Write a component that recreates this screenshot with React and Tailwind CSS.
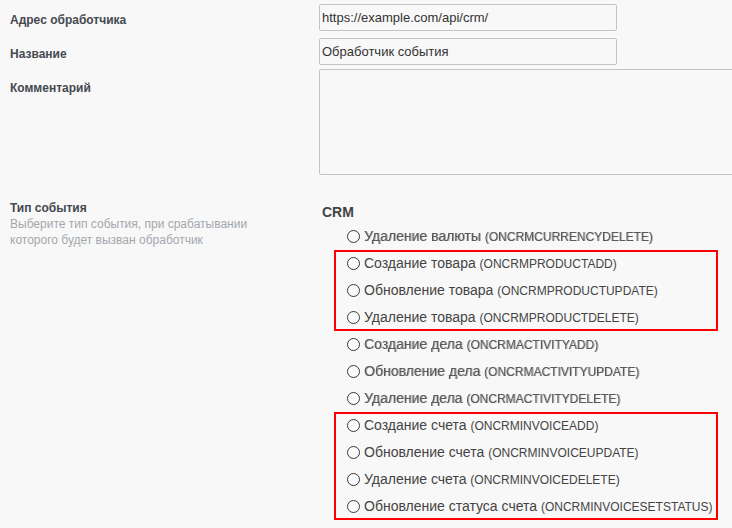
import React from 'react';

const events = [
  { name: 'Удаление валюты', code: 'ONCRMCURRENCYDELETE', group: 0 },
  { name: 'Создание товара', code: 'ONCRMPRODUCTADD', group: 1 },
  { name: 'Обновление товара', code: 'ONCRMPRODUCTUPDATE', group: 1 },
  { name: 'Удаление товара', code: 'ONCRMPRODUCTDELETE', group: 1 },
  { name: 'Создание дела', code: 'ONCRMACTIVITYADD', group: 2 },
  { name: 'Обновление дела', code: 'ONCRMACTIVITYUPDATE', group: 2 },
  { name: 'Удаление дела', code: 'ONCRMACTIVITYDELETE', group: 2 },
  { name: 'Создание счета', code: 'ONCRMINVOICEADD', group: 3 },
  { name: 'Обновление счета', code: 'ONCRMINVOICEUPDATE', group: 3 },
  { name: 'Удаление счета', code: 'ONCRMINVOICEDELETE', group: 3 },
  { name: 'Обновление статуса счета', code: 'ONCRMINVOICESETSTATUS', group: 3 },
];

const groups = [
  { id: 0, marked: false },
  { id: 1, marked: true },
  { id: 2, marked: false },
  { id: 3, marked: true },
];

const EventRow = ({ ev, faded }) => (
  <label className="flex items-center h-[27px] pl-[13px] text-[#444]">
    <span className="w-[13px] h-[13px] rounded-full border border-[#3a3a3a] bg-[#fbfbfb] shrink-0" />
    <span
      className={`ml-[4px] text-[14px] leading-4 whitespace-nowrap ${
        faded ? 'text-[#5a5a5a] blur-[0.3px] [text-shadow:1px_0_0_rgba(0,0,0,0.3)]' : ''
      }`}
    >
      {ev.name} <span className="text-[12px]">({ev.code})</span>
    </span>
  </label>
);

const App = () => {
  return (
    <div className="h-[528px] w-[732px] overflow-hidden bg-[#f8f8f8] font-['Liberation_Sans',Arial,sans-serif]">
      <div className="flex pt-[4px]">
        <div className="w-[319px] shrink-0 pl-[10px] pt-[8px] text-[12px] leading-4 font-bold text-[#454950]">
          Адрес обработчика
        </div>
        <div className="w-[298px] h-[27px] border border-[#c4c4c4] rounded-[2px] bg-[#f8f8f8] px-[2px] flex items-center text-[13px] text-[#333]">
          https://example.com/api/crm/
        </div>
      </div>

      <div className="flex mt-[7px]">
        <div className="w-[319px] shrink-0 pl-[10px] pt-[8px] text-[12px] leading-4 font-bold text-[#454950]">
          Название
        </div>
        <div className="w-[298px] h-[27px] border border-[#c4c4c4] rounded-[2px] bg-[#f8f8f8] px-[2px] flex items-center text-[13px] text-[#333]">
          Обработчик события
        </div>
      </div>

      <div className="flex mt-[4px]">
        <div className="w-[319px] shrink-0 pl-[10px] pt-[11px] text-[12px] leading-4 font-bold text-[#454950]">
          Комментарий
        </div>
        <div className="w-[500px] h-[106px] shrink-0 border border-[#c4c4c4] rounded-[2px] bg-[#f8f8f8]" />
      </div>

      <div className="flex mt-[25px]">
        <div className="w-[319px] shrink-0 pl-[10px] text-[12px] leading-4">
          <div className="font-bold text-[#454950]">Тип события</div>
          <div className="text-[#a3a8ae]">
            Выберите тип события, при срабатывании
            <br />
            которого будет вызван обработчик
          </div>
        </div>
        <div className="pt-[4px]">
          <div className="pl-[3px] text-[14px] leading-4 font-bold text-[#444]">CRM</div>
          <div className="mt-[3px] ml-[15px] w-[384px]">
            {groups.map((g) => (
              <div key={g.id} className="relative">
                {events
                  .filter((ev) => ev.group === g.id)
                  .map((ev) => (
                    <EventRow key={ev.code} ev={ev} faded={!g.marked} />
                  ))}
                {g.marked && (
                  <div className="absolute inset-0 border-2 border-[#ff0000] pointer-events-none" />
                )}
              </div>
            ))}
          </div>
        </div>
      </div>
    </div>
  );
};

export default App;
